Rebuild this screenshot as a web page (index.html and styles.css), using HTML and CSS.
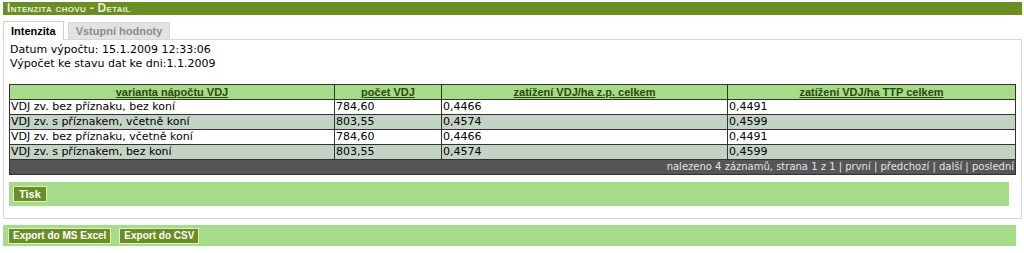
FILE: index.html
```html
<!DOCTYPE html>
<html lang="cs">
<head>
<meta charset="utf-8">
<title>Intenzita chovu - Detail</title>
<link rel="stylesheet" href="styles.css">
</head>
<body>
<div class="page">
  <div class="titlebar">Intenzita chovu - Detail</div>
  <div class="tabs">
    <div class="tab active">Intenzita</div>
    <div class="tab">Vstupní hodnoty</div>
  </div>
  <div class="panel">
    <div class="info">
      <div>Datum výpočtu: 15.1.2009 12:33:06</div>
      <div>Výpočet ke stavu dat ke dni:1.1.2009</div>
    </div>
    <table class="grid">
      <colgroup>
        <col class="c1"><col class="c2"><col class="c3"><col class="c4">
      </colgroup>
      <thead>
        <tr>
          <th><a href="#">varianta nápočtu VDJ</a></th>
          <th><a href="#">počet VDJ</a></th>
          <th><a href="#">zatížení VDJ/ha z.p. celkem</a></th>
          <th><a href="#">zatížení VDJ/ha TTP celkem</a></th>
        </tr>
      </thead>
      <tbody>
        <tr><td>VDJ zv. bez příznaku, bez koní</td><td>784,60</td><td>0,4466</td><td>0,4491</td></tr>
        <tr class="alt"><td>VDJ zv. s příznakem, včetně koní</td><td>803,55</td><td>0,4574</td><td>0,4599</td></tr>
        <tr><td>VDJ zv. bez příznaku, včetně koní</td><td>784,60</td><td>0,4466</td><td>0,4491</td></tr>
        <tr class="alt"><td>VDJ zv. s příznakem, bez koní</td><td>803,55</td><td>0,4574</td><td>0,4599</td></tr>
      </tbody>
      <tfoot>
        <tr><td colspan="4">nalezeno 4 záznamů, strana 1 z 1 | <a href="#">první</a> | <a href="#">předchozí</a> | <a href="#">další</a> | <a href="#">poslední</a></td></tr>
      </tfoot>
    </table>
    <div class="actionbar inner">
      <button class="btn btn-wide">Tisk</button>
    </div>
  </div>
  <div class="actionbar outer">
    <button class="btn">Export do MS Excel</button>
    <button class="btn">Export do CSV</button>
  </div>
</div>
</body>
</html>
```

FILE: styles.css
```css
html, body {
  margin: 0;
  padding: 0;
  background: #ffffff;
}
body {
  font-family: "DejaVu Sans", Verdana, sans-serif;
  font-size: 11px;
  color: #000;
}
.page {
  padding: 2px 2px 0 3px;
}
.titlebar {
  background: #6b8e23;
  color: #e6eed6;
  font-family: "Liberation Sans", Arial, sans-serif;
  font-weight: bold;
  font-variant: small-caps;
  font-size: 12px;
  letter-spacing: 0.3px;
  line-height: 13px;
  height: 13px;
  padding-left: 4px;
}
.tabs {
  display: flex;
  align-items: flex-end;
  gap: 4px;
  margin-top: 5px;
  height: 19px;
}
.tab {
  font-family: "Liberation Sans", Arial, sans-serif;
  font-weight: bold;
  font-size: 11px;
  line-height: 16px;
  height: 16px;
  padding: 0 7px;
  background: #e2e2e2;
  color: #8c8c8c;
  border: 1px solid #d8d8d8;
  border-bottom: none;
}
.tab.active {
  background: #fff;
  color: #000;
  height: 18px;
  line-height: 18px;
  border-color: #d0d0d0;
  position: relative;
  top: 1px;
}
.panel {
  border: 1px solid #d8d8d8;
  padding: 3px 5px 12px 5px;
}
.info {
  line-height: 14px;
  padding-left: 1px;
}
.grid {
  margin-top: 13px;
  width: 1006px;
  border-collapse: collapse;
  table-layout: fixed;
}
.c1 { width: 325px; }
.c2 { width: 107px; }
.c3 { width: 286px; }
.c4 { width: 288px; }
.grid th, .grid td {
  border: 1px solid #333;
  height: 14px;
  line-height: 14px;
  padding: 0 1px;
  white-space: nowrap;
  overflow: hidden;
}
.grid th {
  background: #a6db8a;
  text-align: center;
  font-family: "Liberation Sans", Arial, sans-serif;
}
.grid th a {
  color: #2c4a0c;
  font-weight: bold;
  text-decoration: underline;
}
.grid tbody tr { background: #fff; }
.grid tbody tr.alt { background: #c4d4c4; }
.grid tfoot td {
  background: #565656;
  color: #e4e4e4;
  text-align: right;
  font-size: 10px;
}
.grid tfoot a {
  color: #e4e4e4;
  text-decoration: none;
}
.actionbar {
  background: #a6db8a;
  display: flex;
  gap: 8px;
  align-items: center;
}
.actionbar.inner {
  margin-top: 7px;
  width: 996px;
  height: 24px;
  padding-left: 4px;
}
.actionbar.outer {
  margin-top: 6px;
  width: 1008px;
  height: 21px;
  padding-left: 5px;
}
.btn {
  font-family: "Liberation Sans", Arial, sans-serif;
  font-size: 10px;
  font-weight: bold;
  color: #fff;
  background: #6b8e23;
  border: 1px solid #dcefcc;
  padding: 0 4px;
  height: 16px;
  line-height: 14px;
  margin: 0;
  cursor: pointer;
}
.btn-wide {
  font-size: 11px;
  padding: 0 5px;
}
```
